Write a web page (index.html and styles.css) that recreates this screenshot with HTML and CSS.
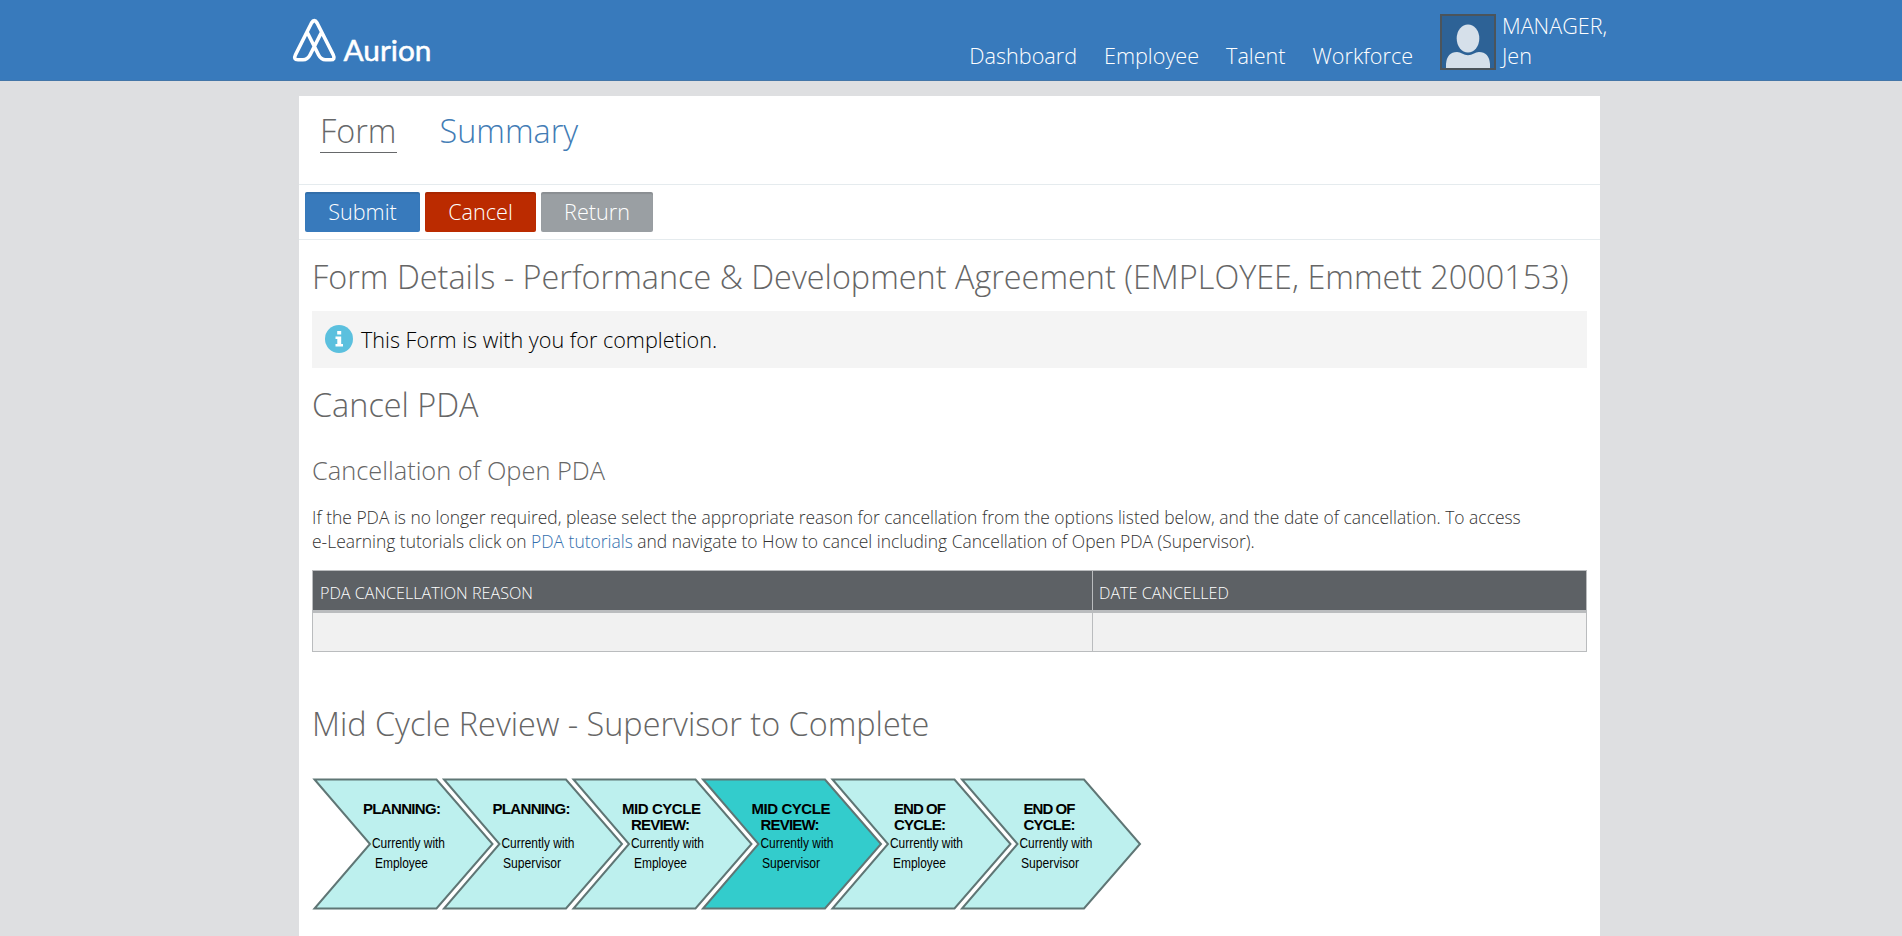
FILE: index.html
```html
<!DOCTYPE html>
<html lang="en">
<head>
<meta charset="utf-8">
<title>Aurion</title>
<link rel="stylesheet" href="styles.css">
</head>
<body>
<header class="topbar">
  <div class="topbar-inner">
    <svg class="logo" width="144" height="50" viewBox="0 0 144 50">
      <g fill="none" stroke="#fff" stroke-width="3.6" stroke-linejoin="round" stroke-linecap="round">
        <path d="M30 16.3 L19 38 Q16.5 42.8 12 42.8 H7 Q2 42.8 4.5 37.8 L20.5 6 Q23.3 1.2 26.1 6 L42.2 37.8 Q44.6 42.8 39.6 42.8 H34.6 Q30.1 42.8 27.6 38 L16.7 16.3"/>
      </g>
      <text class="logo-text" x="52.5" y="44" textLength="88" lengthAdjust="spacingAndGlyphs">Aurion</text>
    </svg>
    <nav class="nav">
      <a>Dashboard</a><a>Employee</a><a>Talent</a><a>Workforce</a>
    </nav>
    <div class="user">
      <svg class="avatar" width="56" height="56" viewBox="0 0 56 56">
        <rect x="1" y="1" width="54" height="54" fill="#2d6296" stroke="#4b545b" stroke-width="2"/>
        <ellipse cx="28" cy="24.5" rx="11.3" ry="14" fill="#d6e0ea"/>
        <path d="M6 54 V50 Q7 38 17 38 Q20 38 22 39.5 Q28 43 34 39.5 Q36 38 39 38 Q49 38 50 50 V54 Z" fill="#d6e0ea"/>
      </svg>
      <div class="user-name">MANAGER,<br>Jen</div>
    </div>
  </div>
</header>
<main class="page">
  <div class="tabs"><a class="tab active">Form</a><a class="tab">Summary</a></div>
  <div class="actions">
    <button class="btn submit">Submit</button>
    <button class="btn cancel">Cancel</button>
    <button class="btn return">Return</button>
  </div>
  <section class="content">
    <h1 class="title t-main">Form Details - Performance &amp; Development Agreement (EMPLOYEE, Emmett 2000153)</h1>
    <div class="notice">
      <svg width="28" height="28" viewBox="0 0 28 28"><circle cx="14" cy="14" r="14" fill="#5bc0de"/><path d="M12.2 6h4v3.6h-4zM10.5 11.4h5.7v7.6h1.8v2.6h-7.5V19h1.8v-5h-1.8z" fill="#fff"/></svg>
      <span>This Form is with you for completion.</span>
    </div>
    <h2 class="title t-cancel">Cancel PDA</h2>
    <h3 class="subtitle">Cancellation of Open PDA</h3>
    <p class="help">If the PDA is no longer required, please select the appropriate reason for cancellation from the options listed below, and the date of cancellation. To access<br>e-Learning tutorials click on <a>PDA tutorials</a> and navigate to How to cancel including Cancellation of Open PDA (Supervisor).</p>
    <div class="grid">
      <div class="th">PDA CANCELLATION REASON</div><div class="th">DATE CANCELLED</div>
      <div class="td"></div><div class="td"></div>
    </div>
    <h2 class="title t-mid">Mid Cycle Review - Supervisor to Complete</h2>
    <svg class="steps" width="832" height="136" viewBox="312 775 832 136">
      <defs><path id="chev" d="M314.5 778.5H436.5L492.5 843L436.5 907.5H314.5L370 843Z"/></defs>
      <g class="step"><use href="#chev"/><text class="h" x="363" y="813" textLength="78">PLANNING:</text><text x="372" y="847" textLength="73" lengthAdjust="spacingAndGlyphs">Currently with</text><text x="375" y="867" textLength="53" lengthAdjust="spacingAndGlyphs">Employee</text></g>
      <g class="step" transform="translate(129.5)"><use href="#chev"/><text class="h" x="363" y="813" textLength="78">PLANNING:</text><text x="372" y="847" textLength="73" lengthAdjust="spacingAndGlyphs">Currently with</text><text x="373.5" y="867" textLength="58" lengthAdjust="spacingAndGlyphs">Supervisor</text></g>
      <g class="step" transform="translate(259)"><use href="#chev"/><text class="h" x="363" y="813" textLength="79">MID CYCLE</text><text class="h" x="372" y="829" textLength="59">REVIEW:</text><text x="372" y="847" textLength="73" lengthAdjust="spacingAndGlyphs">Currently with</text><text x="375" y="867" textLength="53" lengthAdjust="spacingAndGlyphs">Employee</text></g>
      <g class="step current" transform="translate(388.5)"><use href="#chev"/><text class="h" x="363" y="813" textLength="79">MID CYCLE</text><text class="h" x="372" y="829" textLength="59">REVIEW:</text><text x="372" y="847" textLength="73" lengthAdjust="spacingAndGlyphs">Currently with</text><text x="373.5" y="867" textLength="58" lengthAdjust="spacingAndGlyphs">Supervisor</text></g>
      <g class="step" transform="translate(518)"><use href="#chev"/><text class="h" x="376" y="813" textLength="52">END OF</text><text class="h" x="376" y="829" textLength="52">CYCLE:</text><text x="372" y="847" textLength="73" lengthAdjust="spacingAndGlyphs">Currently with</text><text x="375" y="867" textLength="53" lengthAdjust="spacingAndGlyphs">Employee</text></g>
      <g class="step" transform="translate(647.5)"><use href="#chev"/><text class="h" x="376" y="813" textLength="52">END OF</text><text class="h" x="376" y="829" textLength="52">CYCLE:</text><text x="372" y="847" textLength="73" lengthAdjust="spacingAndGlyphs">Currently with</text><text x="373.5" y="867" textLength="58" lengthAdjust="spacingAndGlyphs">Supervisor</text></g>
    </svg>
  </section>
</main>
</body>
</html>
```
FILE: styles.css
```css
* { box-sizing: border-box; }
html, body { margin: 0; height: 936px; overflow: hidden; }
body { background: #dedfe1; font-family: "Open Sans", sans-serif; font-weight: 300; }
.topbar { height: 81px; background: #387abc; border-bottom: 1px solid #4376a8; }
.topbar-inner { display: flex; width: 1323px; height: 80px; margin-left: 291px; }
.logo { margin-top: 17px; overflow: visible; }
.logo-text { font: 400 29px Lato, sans-serif; fill: #fff; stroke: #fff; stroke-width: .5px; }
.nav { display: flex; gap: 27px; margin-left: auto; padding-top: 41px; font-size: 21.6px; line-height: 30px; color: #fff; }
.user { display: flex; gap: 6px; margin-left: 27px; padding-top: 14px; color: #fff; }
.user-name { margin-top: -3px; width: 112px; font-size: 21.6px; line-height: 30px; }
.page { width: 1301px; height: 840px; margin: 15px 0 0 299px; background: #fff; }
.tabs { display: flex; gap: 43px; height: 89px; padding: 11px 21px 0; border-bottom: 1px solid #e5ebee; }
.tab { height: 46px; font-size: 32.4px; line-height: 46px; color: #427cb5; }
.tab.active { color: #66686a; border-bottom: 1px solid #66686a; }
.actions { display: flex; gap: 5px; height: 55px; padding: 7px 6px; border-bottom: 1px solid #e5ebee; }
.btn { height: 40px; padding: 0; border: 0; border-radius: 2px; box-shadow: inset 0 2px 1px rgba(0, 0, 0, .1); color: #fff; font: 300 21.6px/40px "Open Sans", sans-serif; }
.submit { width: 115px; background: #387abc; }
.cancel { width: 111px; background: #bb2b00; }
.return { width: 112px; background: #9a9fa3; }
.content { padding: 0 13px; }
.title { margin: 0; color: #666; font-size: 32.4px; font-weight: 300; line-height: 44px; white-space: nowrap; }
.t-main { padding-top: 14px; height: 71px; }
.notice { display: flex; align-items: center; gap: 8px; height: 57px; padding: 0 0 2px 13px; background: #f4f4f4; color: #000; font-size: 21.6px; }
.notice span { padding-top: 2px; }
.t-cancel { margin-top: 14px; }
.subtitle { margin: 27px 0 0; color: #666; font-size: 25.4px; font-weight: 300; line-height: 34px; }
.help { margin: 18px 0 0; color: #333; font-size: 17.45px; line-height: 24px; white-space: nowrap; }
.help a { color: #336fae; }
.grid { display: grid; grid-template-columns: 780px 494px; margin-top: 17px; border: 1px solid #babcbe; border-width: 1px 0 0 1px; width: 1275px; }
.th { height: 42px; padding: 8px 7px 0; background: #5d6165; border-right: 1px solid #babcbe; border-bottom: 3px solid #babcbe; color: #fff; font-size: 16.15px; line-height: 28px; }
.th + .th { padding-left: 6px; }
.td { height: 39px; background: #f1f1f1; border: 1px solid #babcbe; border-width: 0 1px 1px 0; }
.t-mid { margin-top: 49px; }
.steps { display: block; margin-top: 31px; }
.step { fill: #000; font-family: "Liberation Sans", sans-serif; font-size: 14.3px; }
.step use { fill: #bdf0ee; stroke: #5f7675; stroke-width: 2px; }
.step.current use { fill: #33cccc; }
.step .h { font-size: 15px; font-weight: 700; }
```
